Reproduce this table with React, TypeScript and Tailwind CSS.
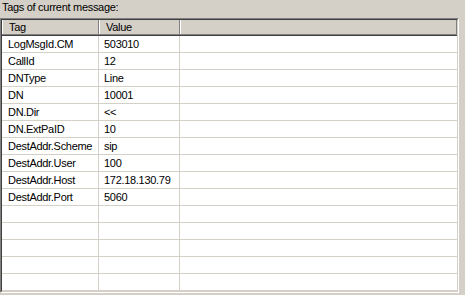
import React from "react";

type Row = { tag: string; value: string };

const rows: Row[] = [
  { tag: "LogMsgId.CM", value: "503010" },
  { tag: "CallId", value: "12" },
  { tag: "DNType", value: "Line" },
  { tag: "DN", value: "10001" },
  { tag: "DN.Dir", value: "<<" },
  { tag: "DN.ExtPaID", value: "10" },
  { tag: "DestAddr.Scheme", value: "sip" },
  { tag: "DestAddr.User", value: "100" },
  { tag: "DestAddr.Host", value: "172.18.130.79" },
  { tag: "DestAddr.Port", value: "5060" },
  { tag: "", value: "" },
  { tag: "", value: "" },
  { tag: "", value: "" },
  { tag: "", value: "" },
  { tag: "", value: "" },
];

function HeaderCell({ label, className }: { label?: string; className: string }) {
  return (
    <div className={`h-full border-l border-white border-r border-r-[#808080] ${className}`}>
      <div className="h-full pl-[6px] leading-[14px] whitespace-nowrap">{label}</div>
    </div>
  );
}

export default function App() {
  return (
    <div className="w-[465px] h-[295px] bg-[#d4d0c8] font-['Liberation_Sans',Arial,sans-serif] text-[11px] tracking-[-0.3px] text-black overflow-hidden">
      <div className="h-[18px] pl-[2px] leading-[14px]">Tags of current message:</div>
      <div className="mr-[6px] h-[275px] border border-[#808080] border-r-white border-b-white">
        <div className="h-full border border-[#404040] border-r-[#d4d0c8] border-b-[#d4d0c8] bg-white flex flex-col overflow-hidden">
          {/* column headers */}
          <div className="h-[16px] shrink-0 bg-[#d4d0c8] border-b border-[#404040]">
            <div className="h-full flex border-b border-[#808080]">
              <HeaderCell label="Tag" className="w-[97px]" />
              <HeaderCell label="Value" className="w-[81px]" />
              <HeaderCell className="flex-1" />
            </div>
          </div>
          {/* rows */}
          {rows.map((r, i) => (
            <div key={i} className="h-[17px] shrink-0 flex border-b border-[#d4d0c8]">
              <div className="w-[97px] border-r border-[#d4d0c8] pl-[6px] leading-[16px] whitespace-nowrap">
                {r.tag}
              </div>
              <div className="w-[81px] border-r border-[#d4d0c8] pl-[5px] leading-[16px] whitespace-nowrap">
                {r.value}
              </div>
              <div className="flex-1" />
            </div>
          ))}
        </div>
      </div>
    </div>
  );
}
